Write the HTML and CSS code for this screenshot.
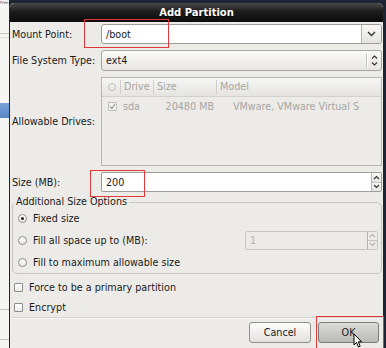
FILE: index.html
```html
<!DOCTYPE html>
<html lang="en">

<head>
    <meta charset="UTF-8">
    <meta name="viewport" content="width=device-width, initial-scale=1.0">
    <title>Add Partition</title>
    <link rel="stylesheet" href="styles.css">
</head>

<body>
    <div class="screen">
        <div class="behind">
            <span class="behind-text">Free</span>
            <div class="behind-line top-line"></div>
            <div class="behind-line second-line"></div>
            <div class="behind-bar"></div>
            <div class="behind-line low-line"></div>
            <div class="behind-line last-line"></div>
        </div>

        <div class="dialog">
            <div class="titlebar">Add Partition</div>
            <div class="dialog-body">
                <div class="form">
                    <label class="form-label">Mount Point:</label>
                    <div class="combo-entry">
                        <span class="entry-text">/boot</span>
                        <span class="combo-button">
                            <svg width="9" height="6" viewBox="0 0 9 6"><path d="M1 1 L4.5 4.5 L8 1" fill="none" stroke="#333" stroke-width="1.4"/></svg>
                        </span>
                    </div>

                    <label class="form-label">File System Type:</label>
                    <div class="combo-box">
                        <span class="entry-text">ext4</span>
                        <span class="combo-sep"></span>
                        <span class="combo-arrows">
                            <svg width="7" height="13" viewBox="0 0 7 13"><path d="M1 4.5 L3.5 2 L6 4.5 M1 8.5 L3.5 11 L6 8.5" fill="none" stroke="#333" stroke-width="1.2"/></svg>
                        </span>
                    </div>

                    <label class="form-label">Allowable Drives:</label>
                    <div class="tree">
                        <div class="tree-head">
                            <span class="col col-check"><span class="head-circle"></span></span>
                            <span class="col col-drive">Drive</span>
                            <span class="col col-size">Size</span>
                            <span class="col col-model">Model</span>
                        </div>
                        <div class="tree-row">
                            <span class="col col-check">
                                <span class="tree-check">
                                    <svg width="7" height="7" viewBox="0 0 7 7"><path d="M1 3.5 L3 5.5 L6 1" fill="none" stroke="#9c9c98" stroke-width="1.3"/></svg>
                                </span>
                            </span>
                            <span class="col col-drive">sda</span>
                            <span class="col col-size size-value">20480 MB</span>
                            <span class="col col-model model-value">VMware, VMware Virtual S</span>
                        </div>
                    </div>

                    <label class="form-label">Size (MB):</label>
                    <div class="spin">
                        <span class="entry-text">200</span>
                        <span class="spin-buttons">
                            <span class="spin-half">
                                <svg width="7" height="5" viewBox="0 0 7 5"><path d="M1 4 L3.5 1.5 L6 4" fill="none" stroke="#333" stroke-width="1.2"/></svg>
                            </span>
                            <span class="spin-half">
                                <svg width="7" height="5" viewBox="0 0 7 5"><path d="M1 1 L3.5 3.5 L6 1" fill="none" stroke="#333" stroke-width="1.2"/></svg>
                            </span>
                        </span>
                    </div>
                </div>

                <fieldset class="size-options">
                    <legend>Additional Size Options</legend>
                    <div class="options">
                        <div class="option">
                            <span class="radio checked"></span>
                            <span>Fixed size</span>
                        </div>
                        <div class="option">
                            <span class="radio"></span>
                            <span>Fill all space up to (MB):</span>
                            <div class="spin spin-disabled">
                                <span class="entry-text">1</span>
                                <span class="spin-buttons">
                                    <span class="spin-half">
                                        <svg width="7" height="5" viewBox="0 0 7 5"><path d="M1 4 L3.5 1.5 L6 4" fill="none" stroke="#b5b5b1" stroke-width="1.2"/></svg>
                                    </span>
                                    <span class="spin-half">
                                        <svg width="7" height="5" viewBox="0 0 7 5"><path d="M1 1 L3.5 3.5 L6 1" fill="none" stroke="#b5b5b1" stroke-width="1.2"/></svg>
                                    </span>
                                </span>
                            </div>
                        </div>
                        <div class="option">
                            <span class="radio"></span>
                            <span>Fill to maximum allowable size</span>
                        </div>
                    </div>
                </fieldset>

                <div class="check-row first-check">
                    <span class="checkbox"></span>
                    <span>Force to be a primary partition</span>
                </div>
                <div class="check-row">
                    <span class="checkbox"></span>
                    <span>Encrypt</span>
                </div>

                <div class="separator"></div>

                <div class="actions">
                    <button class="btn">Cancel</button>
                    <button class="btn btn-ok">OK</button>
                </div>
            </div>
        </div>

        <div class="mark mark-mount"></div>
        <div class="mark mark-size"></div>
        <div class="mark mark-ok"></div>

        <svg class="cursor" width="10" height="15" viewBox="0 0 10 15">
            <path d="M1 1 L1 12 L3.5 9.5 L5.5 14 L7.2 13.2 L5.3 8.8 L8.6 8.8 Z" fill="#fff" stroke="#000" stroke-width="1" stroke-linejoin="round"/>
        </svg>
    </div>
</body>

</html>
```

FILE: styles.css
```css
* {
    box-sizing: border-box;
}

html,
body {
    margin: 0;
    padding: 0;
}

body {
    font-family: "DejaVu Sans", "Liberation Sans", sans-serif;
    font-size: 9.6px;
    color: #1a1a1a;
    background: #1c2531;
}

.screen {
    position: relative;
    width: 386px;
    height: 348px;
    display: flex;
    overflow: hidden;
    background: #1c2531;
}

/* window behind the dialog */
.behind {
    width: 9px;
    flex: none;
    display: flex;
    flex-direction: column;
    background: #f5f5f4;
}

.behind-text {
    height: 6px;
    font-size: 4px;
    line-height: 6px;
    white-space: nowrap;
    color: #555;
}

.behind-line {
    height: 1px;
    background: #c4c4c2;
}

.top-line {
    margin-top: 27px;
}

.second-line {
    margin-top: 3px;
    background: #dcdcda;
}

.behind-bar {
    margin-top: 65px;
    height: 15px;
    background: linear-gradient(#7aa2d6, #5a86c4);
}

.low-line {
    margin-top: 191px;
}

.last-line {
    margin-top: 29px;
}

/* dialog */
.dialog {
    width: 374px;
    flex: none;
    margin-top: 3px;
    display: flex;
    flex-direction: column;
    border-left: 1px solid #262626;
    background: #ecebe7;
    border-radius: 5px 5px 0 0;
}

.titlebar {
    height: 19px;
    line-height: 19px;
    text-align: center;
    font-size: 10px;
    font-weight: bold;
    color: #fff;
    background: linear-gradient(#4a4a4a, #1c1c1c 45%, #0c0c0c);
    border-radius: 5px 5px 0 0;
    text-shadow: 0 1px 0 #000;
}

.dialog-body {
    flex: 1;
    padding: 2px 1px 0 2px;
}

.form {
    display: grid;
    grid-template-columns: 89px 1fr;
    grid-template-rows: 20px 21px 89px 20px;
    row-gap: 6px;
}

.form-label {
    align-self: center;
}

.entry-text {
    flex: 1;
    padding-left: 4px;
    align-self: center;
}

.combo-entry {
    display: flex;
    border: 1px solid #9c9c98;
    border-radius: 3px;
    background: #fff;
}

.combo-button {
    width: 20px;
    display: flex;
    align-items: center;
    justify-content: center;
    border-left: 1px solid #b3b3af;
    border-radius: 0 2px 2px 0;
    background: linear-gradient(#f8f8f7, #e4e3df);
}

.combo-box {
    display: flex;
    align-items: center;
    border: 1px solid #a5a5a1;
    border-radius: 3px;
    background: linear-gradient(#fafaf9, #e6e5e1);
}

.combo-sep {
    width: 1px;
    height: 14px;
    background: #c2c2be;
    box-shadow: 1px 0 0 #fff;
}

.combo-arrows {
    width: 14px;
    display: flex;
    justify-content: center;
}

/* drive list */
.tree {
    border: 1px solid #b6b6b2;
    background: #ecebe7;
    color: #a6a6a3;
}

.tree-head {
    display: grid;
    grid-template-columns: 18px 33px 63px 1fr;
    height: 19px;
    align-items: center;
    background: linear-gradient(#f6f6f5, #e5e4e0);
    border-bottom: 1px solid #d2d1cd;
}

.tree-row {
    display: grid;
    grid-template-columns: 18px 33px 63px 1fr;
    height: 18px;
    align-items: center;
}

.col {
    padding-left: 3px;
    white-space: nowrap;
}

.tree-head .col-drive,
.tree-head .col-size,
.tree-head .col-model {
    border-left: 1px solid #cfcfcb;
    line-height: 14px;
}

.col-check {
    display: flex;
    justify-content: center;
    padding-left: 2px;
}

.head-circle {
    width: 8px;
    height: 8px;
    border: 1px solid #bdbdb9;
    border-radius: 50%;
}

.tree-check {
    width: 9px;
    height: 9px;
    display: flex;
    align-items: center;
    justify-content: center;
    border: 1px solid #c0c0bc;
    border-radius: 1px;
    background: #f2f2f0;
}

.size-value {
    text-align: right;
    padding-right: 2px;
}

.model-value {
    padding-left: 17px;
    overflow: hidden;
}

/* spin buttons */
.spin {
    display: flex;
    border: 1px solid #9c9c98;
    border-radius: 2px;
    background: #fff;
}

.spin-buttons {
    width: 10px;
    display: flex;
    flex-direction: column;
    border-left: 1px solid #b3b3af;
}

.spin-half {
    flex: 1;
    display: flex;
    align-items: center;
    justify-content: center;
    background: linear-gradient(#f8f8f7, #e6e5e1);
}

.spin-half + .spin-half {
    border-top: 1px solid #c4c4c0;
}

.spin-disabled {
    width: 133px;
    height: 19px;
    margin-left: auto;
    margin-right: 3px;
    background: #ecebe7;
    border-color: #c6c6c2;
    color: #b0b0ad;
}

.spin-disabled .spin-half {
    background: #ecebe7;
}

/* size options frame */
.size-options {
    margin: 4px 0 0;
    padding: 0;
    border: 1px solid #c6c5c1;
    border-radius: 5px;
    min-width: 0;
}

.size-options legend {
    margin-left: 1px;
    padding: 0 2px;
    line-height: 12px;
}

.options {
    padding-left: 5px;
}

.option {
    display: flex;
    align-items: center;
    gap: 6px;
    height: 21px;
}

.option + .option {
    height: 22px;
}

.radio {
    width: 9px;
    height: 9px;
    flex: none;
    display: flex;
    align-items: center;
    justify-content: center;
    border: 1px solid #8c8c88;
    border-radius: 50%;
    background: linear-gradient(#fff, #ecebe8);
}

.radio.checked::after {
    content: "";
    width: 3px;
    height: 3px;
    border-radius: 50%;
    background: #222;
}

.check-row {
    display: flex;
    align-items: center;
    gap: 6px;
    height: 20px;
    padding-left: 2px;
}

.first-check {
    margin-top: 3px;
}

.checkbox {
    width: 9px;
    height: 9px;
    flex: none;
    border: 1px solid #8c8c88;
    border-radius: 1px;
    background: linear-gradient(#fff, #ecebe8);
}

.separator {
    height: 1px;
    background: #d3d2ce;
    box-shadow: 0 1px 0 #f8f8f6;
}

.actions {
    display: flex;
    justify-content: flex-end;
    gap: 7px;
    margin-top: 4px;
    padding-right: 3px;
}

.btn {
    height: 21px;
    width: 62px;
    padding: 0;
    font-family: inherit;
    font-size: 9.6px;
    color: #1a1a1a;
    border: 1px solid #8f8f8b;
    border-radius: 3px;
    background: linear-gradient(#fcfcfb, #e2e1dd);
}

.btn-ok {
    width: 61px;
    border-color: #7c7c79;
    background: linear-gradient(#dcdcd9, #b9b9b5);
}

/* red annotation boxes over the screenshot */
.mark {
    position: absolute;
    border: 1.5px solid #e23a3a;
}

.mark-mount {
    left: 84px;
    top: 19px;
    width: 85px;
    height: 29px;
}

.mark-size {
    left: 90px;
    top: 170px;
    width: 55px;
    height: 27px;
}

.mark-ok {
    left: 316px;
    top: 316px;
    width: 68px;
    height: 34px;
}

.cursor {
    position: absolute;
    left: 353px;
    top: 333px;
}
```
